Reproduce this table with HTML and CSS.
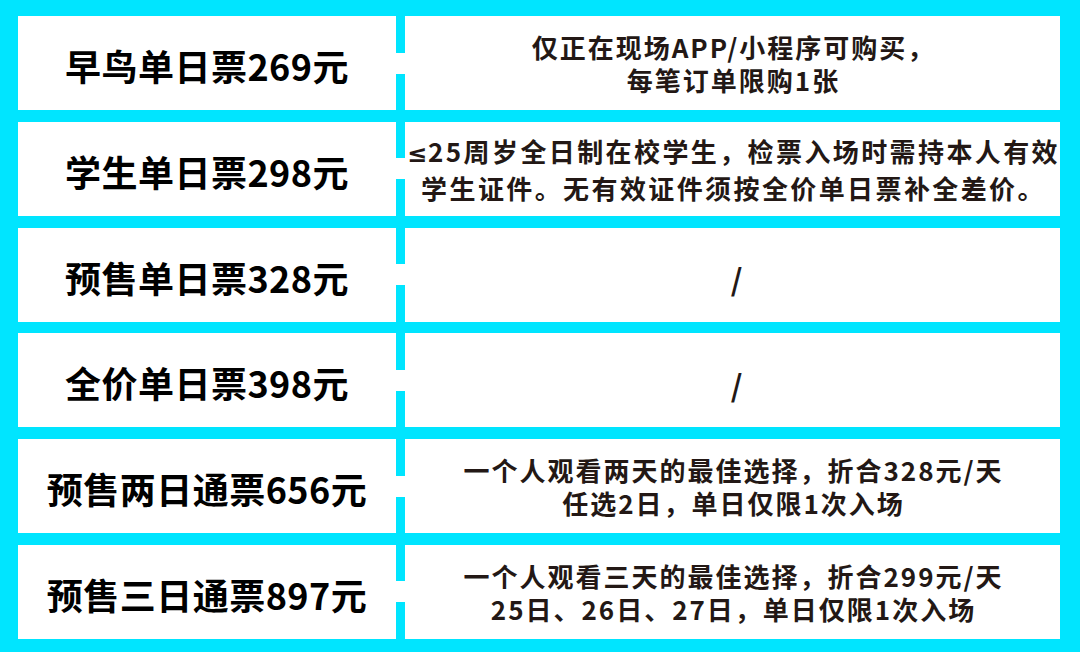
FILE: index.html
```html
<!DOCTYPE html>
<html lang="zh-CN">
<head>
<meta charset="utf-8">
<title>票价</title>
<link rel="stylesheet" href="styles.css">
</head>
<body>
<div class="table">
  <div class="cell name">早鸟单日票269元</div>
  <div class="bridge"></div>
  <div class="cell note"><div class="txt">仅正在现场APP/小程序可购买，<br>每笔订单限购1张</div></div>

  <div class="cell name">学生单日票298元</div>
  <div class="bridge"></div>
  <div class="cell note tight"><div class="txt"><span class="sym">≤</span>25周岁全日制在校学生，检票入场时需持本人有效<br>学生证件。无有效证件须按全价单日票补全差价。</div></div>

  <div class="cell name">预售单日票328元</div>
  <div class="bridge"></div>
  <div class="cell note slash">/</div>

  <div class="cell name">全价单日票398元</div>
  <div class="bridge"></div>
  <div class="cell note slash">/</div>

  <div class="cell name">预售两日通票656元</div>
  <div class="bridge"></div>
  <div class="cell note"><div class="txt">一个人观看两天的最佳选择，折合328元/天<br>任选2日，单日仅限1次入场</div></div>

  <div class="cell name">预售三日通票897元</div>
  <div class="bridge"></div>
  <div class="cell note"><div class="txt">一个人观看三天的最佳选择，折合299元/天<br>25日、26日、27日，单日仅限1次入场</div></div>
</div>
</body>
</html>
```

FILE: styles.css
```css
html, body {
  margin: 0;
  padding: 0;
  background: #00e5ff;
}

.table {
  width: 1080px;
  height: 652px;
  box-sizing: border-box;
  padding: 16px 20px 0 18px;
  display: grid;
  grid-template-columns: 378px 9px 655px;
  grid-template-rows: repeat(6, 94px);
  row-gap: 11.8px;
  font-family: "Noto Sans CJK SC", "Noto Sans", sans-serif;
  font-weight: 700;
}

.cell {
  background: #ffffff;
  display: flex;
  align-items: center;
  justify-content: center;
  text-align: center;
  white-space: nowrap;
}

.bridge {
  background: #ffffff;
  height: 21px;
  align-self: center;
}

.name {
  font-size: 36px;
  letter-spacing: 0.5px;
  color: #000000;
  padding-top: 4px;
  box-sizing: border-box;
}

.note {
  font-size: 26px;
  letter-spacing: 2px;
  line-height: 33px;
  color: #231815;
  padding-left: 2px;
}

.txt {
  text-align: center;
}

.note.tight {
  letter-spacing: 2.4px;
}

.sym {
  font-family: "DejaVu Sans", sans-serif;
  font-size: 24px;
  letter-spacing: 1px;
}

.note.slash {
  font-size: 30px;
  padding-top: 8px;
  padding-left: 10px;
  box-sizing: border-box;
}
```
